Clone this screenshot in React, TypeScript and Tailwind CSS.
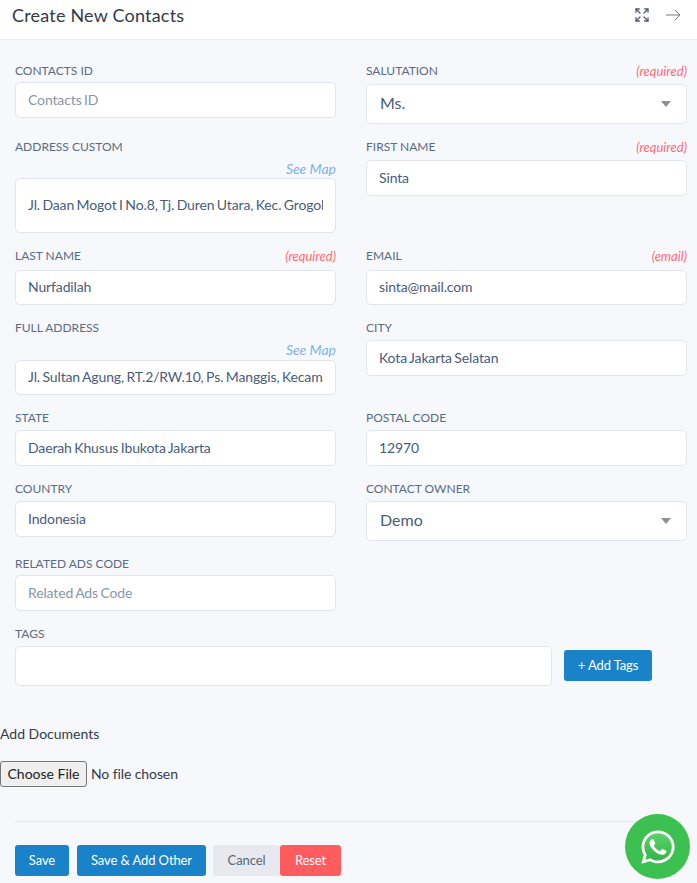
import type { ReactNode } from 'react';
import { Expand } from 'lucide-react';
import { FaWhatsapp } from 'react-icons/fa';

const inputClass =
  'w-full rounded-[5px] border border-[#e2e5ec] bg-white px-3 pb-[2px] text-sm tracking-[-0.13px] [word-spacing:-1px] text-[#495c7a] placeholder:text-[#8a97a8] outline-none';
const buttonClass = 'h-[31px] rounded-[3px] text-[13px] tracking-[-0.1px]';

interface FieldProps {
  label: string;
  hint?: string;
  gap: string;
  children: ReactNode;
}

function Field({ label, hint, gap, children }: FieldProps) {
  return (
    <div className="pb-[15px]">
      <div className={`flex h-4 items-center justify-between ${gap}`}>
        <span className="text-xs leading-4 text-[#5a6b85]">{label}</span>
        {hint && <span className="text-[13px] italic leading-4 text-[#ff6b72]">{hint}</span>}
      </div>
      {children}
    </div>
  );
}

function SelectBox({ value }: { value: string }) {
  return (
    <div className="relative">
      <select
        defaultValue={value}
        className="h-10 w-full appearance-none rounded-[5px] border border-[#e2e5ec] bg-white px-[13px] pb-[2px] text-base text-[#495c7a] outline-none"
      >
        <option>{value}</option>
      </select>
      <span className="pointer-events-none absolute right-4 top-[17px] h-0 w-0 border-x-[5px] border-t-[6px] border-x-transparent border-t-[#8f8f95]" />
    </div>
  );
}

export default function App() {
  return (
    <div
      className="relative h-[883px] w-[697px] overflow-hidden bg-[#f7f8fc]"
      style={{ fontFamily: 'Lato, "Liberation Sans", sans-serif' }}
    >
      <div className="flex h-10 items-start justify-between border-b border-[#e9ecf2] bg-white pl-3 pr-4 pt-[2px]">
        <h2 className="text-lg leading-[26px] tracking-[0.2px] text-[#343a46]">Create New Contacts</h2>
        <div className="flex items-center gap-4 pt-[5px]">
          <Expand size={16} strokeWidth={1.9} className="text-[#555c6b]" />
          <svg width="15" height="12" viewBox="0 0 15 12" fill="none" stroke="#77798a" strokeWidth="1">
            <path d="M0 6h14M9 1l5 5-5 5" />
          </svg>
        </div>
      </div>

      <div className="px-[15px] pt-[23px]">
        <div className="grid grid-cols-[321px_321px] gap-x-[30px]">
          <Field label="CONTACTS ID" gap="mb-[3px]">
            <input placeholder="Contacts ID" className={`${inputClass} h-9`} />
          </Field>
          <Field label="SALUTATION" hint="(required)" gap="mb-[5px]">
            <SelectBox value="Ms." />
          </Field>

          <Field label="ADDRESS CUSTOM" gap="mb-0">
            <div className="mb-[1px] mt-[6px] h-4 text-right text-sm italic leading-4 text-[#7fb2e5]">See Map</div>
            <input defaultValue="Jl. Daan Mogot I No.8, Tj. Duren Utara, Kec. Grogol petamburan" className={`${inputClass} h-[55px]`} />
          </Field>
          <Field label="FIRST NAME" hint="(required)" gap="mb-[5px]">
            <input defaultValue="Sinta" className={`${inputClass} h-9`} />
          </Field>

          <Field label="LAST NAME" hint="(required)" gap="mb-[6px]">
            <input defaultValue="Nurfadilah" className={`${inputClass} h-[35px]`} />
          </Field>
          <Field label="EMAIL" hint="(email)" gap="mb-[6px]">
            <input defaultValue="sinta@mail.com" className={`${inputClass} h-[35px]`} />
          </Field>

          <Field label="FULL ADDRESS" gap="mb-0">
            <div className="mb-[2px] mt-[6px] h-4 text-right text-sm italic leading-4 text-[#7fb2e5]">See Map</div>
            <input defaultValue="Jl. Sultan Agung, RT.2/RW.10, Ps. Manggis, Kecamatan Setiabudi" className={`${inputClass} h-[35px]`} />
          </Field>
          <Field label="CITY" gap="mb-1">
            <input defaultValue="Kota Jakarta Selatan" className={`${inputClass} h-9`} />
          </Field>

          <Field label="STATE" gap="mb-1">
            <input defaultValue="Daerah Khusus Ibukota Jakarta" className={`${inputClass} h-9`} />
          </Field>
          <Field label="POSTAL CODE" gap="mb-1">
            <input defaultValue="12970" className={`${inputClass} h-9`} />
          </Field>

          <Field label="COUNTRY" gap="mb-1">
            <input defaultValue="Indonesia" className={`${inputClass} h-9`} />
          </Field>
          <Field label="CONTACT OWNER" gap="mb-1">
            <SelectBox value="Demo" />
          </Field>

          <Field label="RELATED ADS CODE" gap="mb-[3px]">
            <input placeholder="Related Ads Code" className={`${inputClass} h-9`} />
          </Field>
        </div>

        <div className="flex h-4 items-center text-xs text-[#5a6b85]">TAGS</div>
        <div className="mt-1 flex items-center gap-3">
          <div className="w-[537px]">
            <input className={`${inputClass} h-10`} />
          </div>
          <button className={`${buttonClass} mb-[1px] w-[88px] bg-[#1a82c8] text-white`}>+ Add Tags</button>
        </div>
      </div>

      <div className="mt-[38px] text-sm leading-5 text-[#343a46]">Add Documents</div>
      <div className="mt-[17px]">
        <input
          type="file"
          className="block text-sm tracking-[-0.1px] text-[#343a46] file:mr-1 file:h-[26px] file:w-[87px] file:rounded-[3px] file:border file:border-[#767676] file:bg-[#efefef] file:text-sm file:tracking-normal file:text-[#222]"
        />
      </div>

      <div className="mx-[15px] mt-[34px] border-t border-[#e2e5ec]" />

      <div className="mt-[23px] flex px-[15px]">
        <button className={`${buttonClass} w-[54px] bg-[#1a82c8] text-white`}>Save</button>
        <button className={`${buttonClass} ml-2 w-[129px] bg-[#1a82c8] text-white`}>Save &amp; Add Other</button>
        <button className={`${buttonClass} ml-[7px] w-[67px] bg-[#e7e9ee] text-[#5a6478]`}>Cancel</button>
        <button className={`${buttonClass} w-[61px] bg-[#ff5c60] text-white`}>Reset</button>
      </div>

      <div className="absolute left-[625px] top-[814px] flex h-[65px] w-[65px] items-center justify-center rounded-full bg-[#3cc04f]">
        <span className="absolute h-[30px] w-[30px] rounded-full bg-gradient-to-b from-[#5fd46c] to-[#2fb344]" />
        <FaWhatsapp size={38} className="relative text-white" />
      </div>
    </div>
  );
}
